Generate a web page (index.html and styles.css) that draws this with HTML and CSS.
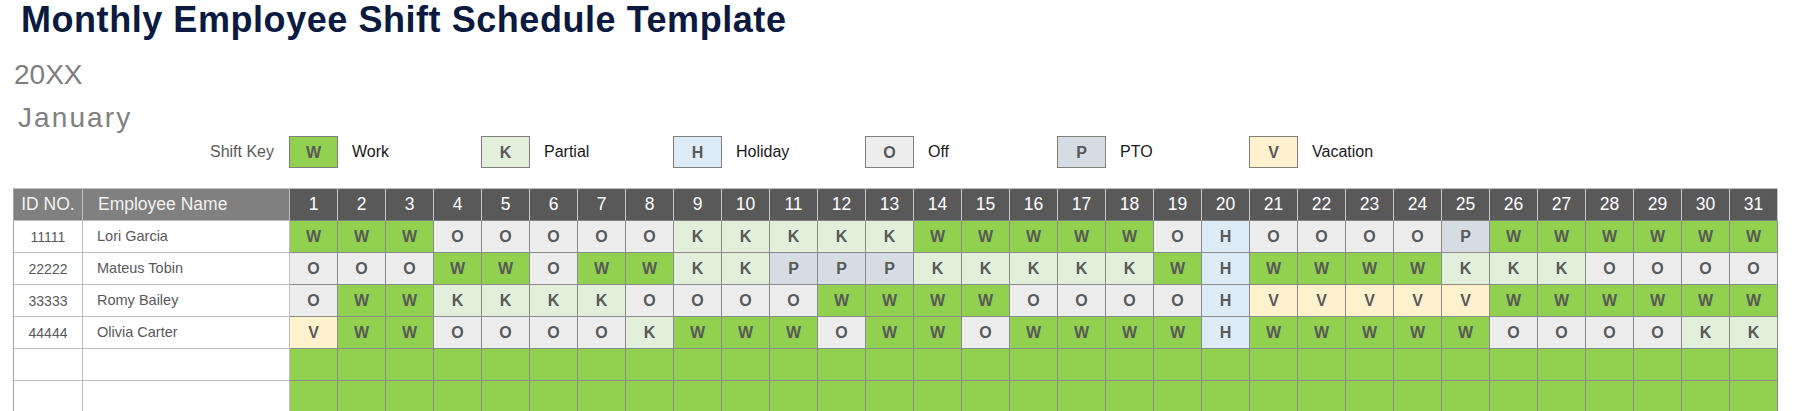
FILE: index.html
```html
<!DOCTYPE html>
<html lang="en">
<head>
<meta charset="utf-8">
<title>Monthly Employee Shift Schedule Template</title>
<link rel="stylesheet" href="styles.css">
</head>
<body>
<h1 class="title">Monthly Employee Shift Schedule Template</h1>
<div class="year">20XX</div>
<div class="month">January</div>

<div class="legend">
  <div class="legend-title">Shift Key</div>
  <div class="legend-item"><div class="legend-box w">W</div><div class="legend-label">Work</div></div>
  <div class="legend-item"><div class="legend-box k">K</div><div class="legend-label">Partial</div></div>
  <div class="legend-item"><div class="legend-box h">H</div><div class="legend-label">Holiday</div></div>
  <div class="legend-item"><div class="legend-box o">O</div><div class="legend-label">Off</div></div>
  <div class="legend-item"><div class="legend-box p">P</div><div class="legend-label">PTO</div></div>
  <div class="legend-item"><div class="legend-box v">V</div><div class="legend-label">Vacation</div></div>
</div>

<div class="schedule">
  <div class="hcell id">ID NO.</div>
  <div class="hcell name">Employee Name</div>
  <div class="hday">1</div><div class="hday">2</div><div class="hday">3</div><div class="hday">4</div><div class="hday">5</div><div class="hday">6</div><div class="hday">7</div><div class="hday">8</div><div class="hday">9</div><div class="hday">10</div><div class="hday">11</div><div class="hday">12</div><div class="hday">13</div><div class="hday">14</div><div class="hday">15</div><div class="hday">16</div><div class="hday">17</div><div class="hday">18</div><div class="hday">19</div><div class="hday">20</div><div class="hday">21</div><div class="hday">22</div><div class="hday">23</div><div class="hday">24</div><div class="hday">25</div><div class="hday">26</div><div class="hday">27</div><div class="hday">28</div><div class="hday">29</div><div class="hday">30</div><div class="hday">31</div>

  <div class="cell id">11111</div>
  <div class="cell name">Lori Garcia</div>
  <div class="day w">W</div><div class="day w">W</div><div class="day w">W</div><div class="day o">O</div><div class="day o">O</div><div class="day o">O</div><div class="day o">O</div><div class="day o">O</div><div class="day k">K</div><div class="day k">K</div><div class="day k">K</div><div class="day k">K</div><div class="day k">K</div><div class="day w">W</div><div class="day w">W</div><div class="day w">W</div><div class="day w">W</div><div class="day w">W</div><div class="day o">O</div><div class="day h">H</div><div class="day o">O</div><div class="day o">O</div><div class="day o">O</div><div class="day o">O</div><div class="day p">P</div><div class="day w">W</div><div class="day w">W</div><div class="day w">W</div><div class="day w">W</div><div class="day w">W</div><div class="day w">W</div>

  <div class="cell id">22222</div>
  <div class="cell name">Mateus Tobin</div>
  <div class="day o">O</div><div class="day o">O</div><div class="day o">O</div><div class="day w">W</div><div class="day w">W</div><div class="day o">O</div><div class="day w">W</div><div class="day w">W</div><div class="day k">K</div><div class="day k">K</div><div class="day p">P</div><div class="day p">P</div><div class="day p">P</div><div class="day k">K</div><div class="day k">K</div><div class="day k">K</div><div class="day k">K</div><div class="day k">K</div><div class="day w">W</div><div class="day h">H</div><div class="day w">W</div><div class="day w">W</div><div class="day w">W</div><div class="day w">W</div><div class="day k">K</div><div class="day k">K</div><div class="day k">K</div><div class="day o">O</div><div class="day o">O</div><div class="day o">O</div><div class="day o">O</div>

  <div class="cell id">33333</div>
  <div class="cell name">Romy Bailey</div>
  <div class="day o">O</div><div class="day w">W</div><div class="day w">W</div><div class="day k">K</div><div class="day k">K</div><div class="day k">K</div><div class="day k">K</div><div class="day o">O</div><div class="day o">O</div><div class="day o">O</div><div class="day o">O</div><div class="day w">W</div><div class="day w">W</div><div class="day w">W</div><div class="day w">W</div><div class="day o">O</div><div class="day o">O</div><div class="day o">O</div><div class="day o">O</div><div class="day h">H</div><div class="day v">V</div><div class="day v">V</div><div class="day v">V</div><div class="day v">V</div><div class="day v">V</div><div class="day w">W</div><div class="day w">W</div><div class="day w">W</div><div class="day w">W</div><div class="day w">W</div><div class="day w">W</div>

  <div class="cell id">44444</div>
  <div class="cell name">Olivia Carter</div>
  <div class="day v">V</div><div class="day w">W</div><div class="day w">W</div><div class="day o">O</div><div class="day o">O</div><div class="day o">O</div><div class="day o">O</div><div class="day k">K</div><div class="day w">W</div><div class="day w">W</div><div class="day w">W</div><div class="day o">O</div><div class="day w">W</div><div class="day w">W</div><div class="day o">O</div><div class="day w">W</div><div class="day w">W</div><div class="day w">W</div><div class="day w">W</div><div class="day h">H</div><div class="day w">W</div><div class="day w">W</div><div class="day w">W</div><div class="day w">W</div><div class="day w">W</div><div class="day o">O</div><div class="day o">O</div><div class="day o">O</div><div class="day o">O</div><div class="day k">K</div><div class="day k">K</div>

  <div class="cell id"></div>
  <div class="cell name"></div>
  <div class="day w"></div><div class="day w"></div><div class="day w"></div><div class="day w"></div><div class="day w"></div><div class="day w"></div><div class="day w"></div><div class="day w"></div><div class="day w"></div><div class="day w"></div><div class="day w"></div><div class="day w"></div><div class="day w"></div><div class="day w"></div><div class="day w"></div><div class="day w"></div><div class="day w"></div><div class="day w"></div><div class="day w"></div><div class="day w"></div><div class="day w"></div><div class="day w"></div><div class="day w"></div><div class="day w"></div><div class="day w"></div><div class="day w"></div><div class="day w"></div><div class="day w"></div><div class="day w"></div><div class="day w"></div><div class="day w"></div>

  <div class="cell id"></div>
  <div class="cell name"></div>
  <div class="day w"></div><div class="day w"></div><div class="day w"></div><div class="day w"></div><div class="day w"></div><div class="day w"></div><div class="day w"></div><div class="day w"></div><div class="day w"></div><div class="day w"></div><div class="day w"></div><div class="day w"></div><div class="day w"></div><div class="day w"></div><div class="day w"></div><div class="day w"></div><div class="day w"></div><div class="day w"></div><div class="day w"></div><div class="day w"></div><div class="day w"></div><div class="day w"></div><div class="day w"></div><div class="day w"></div><div class="day w"></div><div class="day w"></div><div class="day w"></div><div class="day w"></div><div class="day w"></div><div class="day w"></div><div class="day w"></div>
</div>
</body>
</html>
```

FILE: styles.css
```css
* { box-sizing: border-box; }

body {
  margin: 0;
  background: #ffffff;
  font-family: "Liberation Sans", Arial, sans-serif;
  color: #595959;
}

.title {
  margin: 0 0 17px 0;
  padding-left: 21px;
  font-size: 36px;
  line-height: 40px;
  font-weight: bold;
  letter-spacing: 0.55px;
  color: #0b1a3f;
}

.year {
  padding-left: 14px;
  font-size: 28px;
  line-height: 36px;
  color: #808080;
}

.month {
  margin-top: 7px;
  padding-left: 18px;
  font-size: 28px;
  line-height: 36px;
  letter-spacing: 2.1px;
  color: #808080;
}

.legend {
  display: grid;
  grid-template-columns: 69px 207px repeat(31, 48px);
  grid-auto-rows: 32px;
  margin: 0 0 0 14px;
}

.legend-title {
  grid-column: span 2;
  text-align: right;
  padding-right: 16px;
  font-size: 16px;
  line-height: 32px;
  color: #595959;
}

.legend-item {
  grid-column: span 4;
  display: flex;
  align-items: center;
}

.legend-box {
  width: 49px;
  height: 32px;
  margin-left: -1px;
  border: 1px solid #7f7f7f;
  display: flex;
  align-items: center;
  justify-content: center;
  padding-top: 1px;
  font-size: 16px;
  font-weight: bold;
  color: #595959;
}

.legend-label {
  margin-left: 14px;
  font-size: 16px;
  line-height: 32px;
  color: #1a1a1a;
}

.schedule {
  display: grid;
  grid-template-columns: 69px 207px repeat(31, 48px);
  grid-auto-rows: 32px;
  width: max-content;
  margin: 20px 0 0 13px;
  border-left: 1px solid #a6a6a6;
  border-top: 1px solid #bfbfbf;
}

.hcell {
  display: flex;
  align-items: center;
  background: #808080;
  color: #f2f2f2;
  font-size: 17.5px;
  border-right: 1px solid #bfbfbf;
  border-bottom: 1px solid #bfbfbf;
}

.hcell.id { justify-content: center; }
.hcell.name { padding-left: 15px; }

.hday {
  display: flex;
  align-items: center;
  justify-content: center;
  background: #595959;
  color: #ffffff;
  font-size: 17.5px;
  border-right: 1px solid #c8c8c8;
  border-bottom: 1px solid #808080;
}

.cell {
  display: flex;
  align-items: center;
  background: #ffffff;
  color: #595959;
  border-right: 1px solid #bfbfbf;
  border-bottom: 1px solid #bfbfbf;
}

.cell.id {
  justify-content: center;
  font-size: 14px;
  padding-top: 1px;
}

.cell.name {
  padding-left: 14px;
  font-size: 14.5px;
  padding-bottom: 1px;
}

.day {
  display: flex;
  align-items: center;
  justify-content: center;
  font-size: 16px;
  font-weight: bold;
  color: #595959;
  border-right: 1px solid #8a8a8a;
  border-bottom: 1px solid #8a8a8a;
}

.w { background: #92d050; }
.k { background: #e2efda; }
.h { background: #ddebf7; }
.o { background: #ededed; }
.p { background: #d6dce4; }
.v { background: #fff2cc; }
```
